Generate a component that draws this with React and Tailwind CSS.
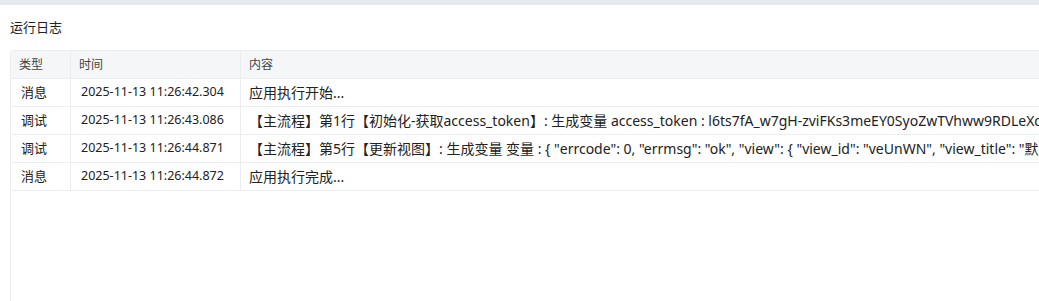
const logs = [
  { type: '消息', time: '2025-11-13 11:26:42.304', content: '应用执行开始...' },
  {
    type: '调试',
    time: '2025-11-13 11:26:43.086',
    content:
      '【主流程】第1行【初始化-获取access_token】: 生成变量 access_token : l6ts7fA_w7gH-zviFKs3meEY0SyoZwTVhww9RDLeXq2mPZkQbYJ0aT',
  },
  {
    type: '调试',
    time: '2025-11-13 11:26:44.871',
    content:
      '【主流程】第5行【更新视图】: 生成变量 变量 : { "errcode": 0, "errmsg": "ok", "view": { "view_id": "veUnWN", "view_title": "默认视图" } }',
  },
  { type: '消息', time: '2025-11-13 11:26:44.872', content: '应用执行完成...' },
];

const font = { fontFamily: '"Noto Sans", "Noto Sans CJK SC", sans-serif' };

export default function App() {
  return (
    <div className="h-[301px] w-[1039px] overflow-hidden bg-white" style={font}>
      <div className="h-[5px] bg-[#e6e9ee]" />
      <div className="pl-[10px]">
        <div className="flex h-[45px] items-center text-[13px] text-[#222]">运行日志</div>
        <div className="w-[1200px] h-[260px] rounded-tl-[4px] border-l border-t border-[#ebedf0]">
          <div className="flex h-[28px] items-center bg-[#f5f6f8] border-b border-[#ebedf0] text-[12px] text-[#444]">
            <div className="w-[60px] h-full flex items-center pl-[8px] border-r border-[#ebedf0]">类型</div>
            <div className="w-[170px] h-full flex items-center pl-[8px] border-r border-[#ebedf0]">时间</div>
            <div className="flex-1 h-full flex items-center pl-[8px]">内容</div>
          </div>
          {logs.map((l, i) => (
            <div key={i} className="flex h-[28px] items-center border-b border-[#ebedf0] text-[13px] text-[#222]">
              <div className="w-[60px] h-full flex items-center pl-[10px] border-r border-[#ebedf0]">{l.type}</div>
              <div className="w-[170px] h-full flex items-center pl-[10px] border-r border-[#ebedf0] text-[12.5px]">
                {l.time}
              </div>
              <div className="flex-1 h-full flex items-center pl-[8px] whitespace-nowrap overflow-hidden text-[14px]">
                {l.content}
              </div>
            </div>
          ))}
        </div>
      </div>
    </div>
  );
}
